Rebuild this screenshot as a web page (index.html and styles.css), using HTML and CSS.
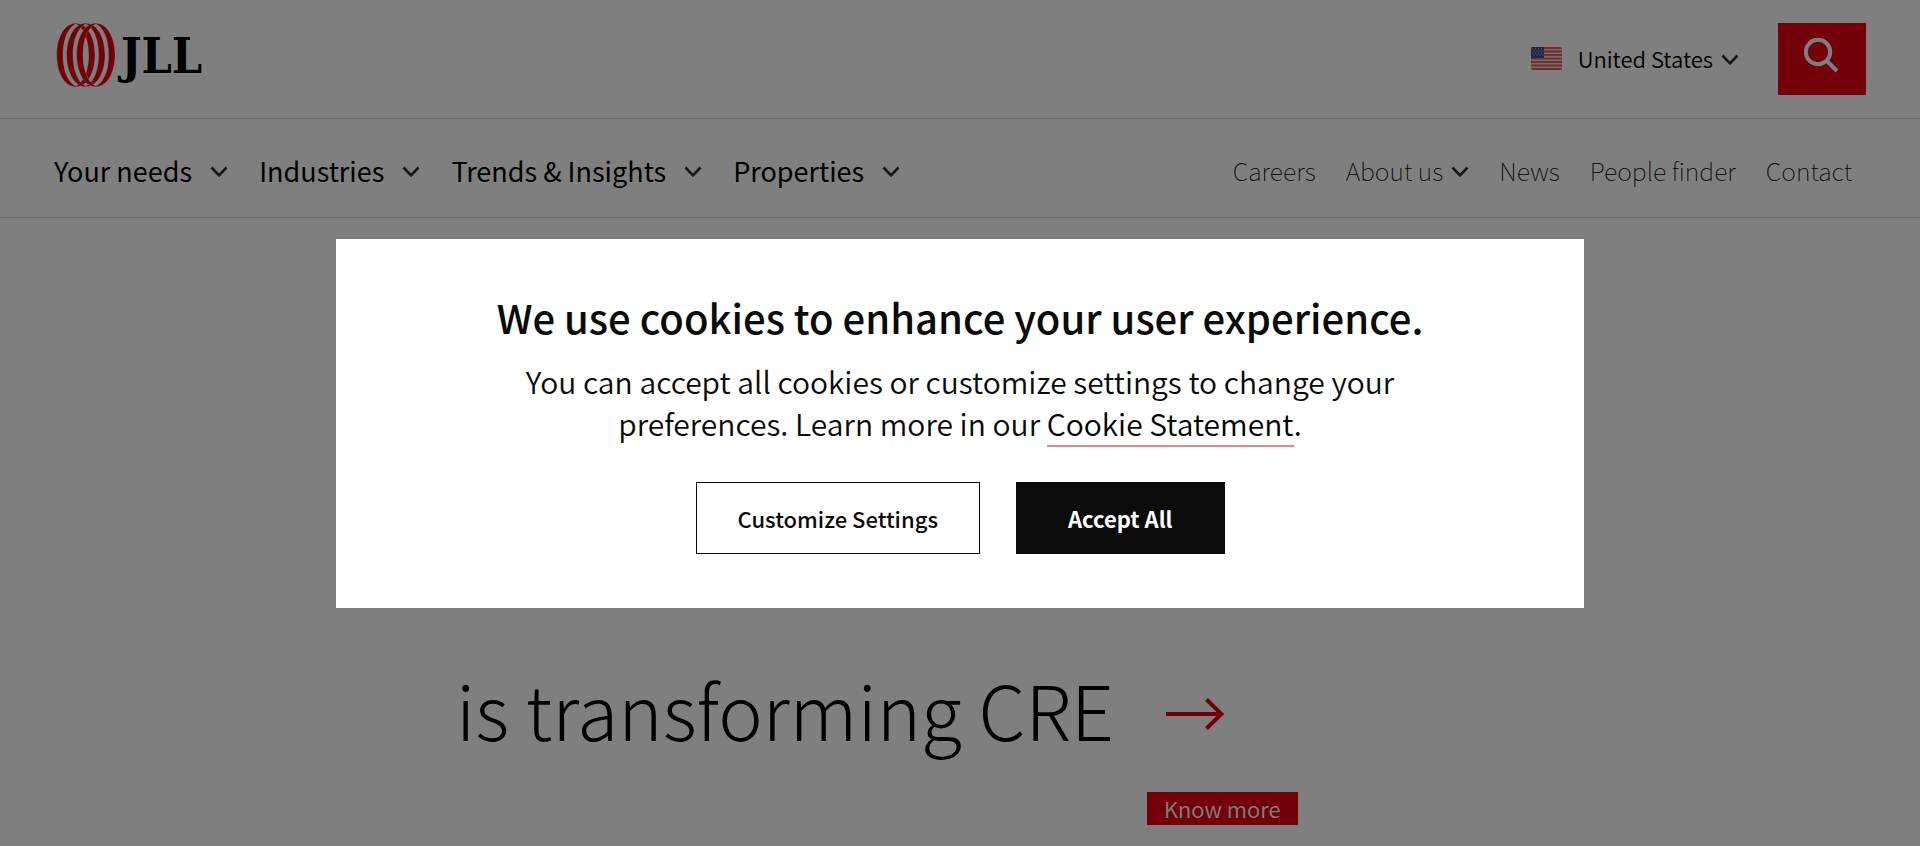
FILE: index.html
```html
<!DOCTYPE html>
<html lang="en">
<head>
<meta charset="utf-8">
<meta name="viewport" content="width=device-width, initial-scale=1">
<title>JLL</title>
<link rel="stylesheet" href="styles.css">
</head>
<body>
<svg width="0" height="0" class="sprite" aria-hidden="true">
  <symbol id="chevron" viewBox="0 0 18 12"><path d="M1.5 1.5 9 9.3l7.500-7.800" fill="none" stroke="currentColor" stroke-width="2.600"/></symbol>
</svg>
<header class="site-header">
  <div class="topbar">
    <a href="#" class="logo" aria-label="JLL home">
      <svg width="150" height="68" viewBox="0 0 150 68" aria-hidden="true">
        <g class="logo-rings" transform="translate(-16 -13) scale(.33333)">
          <path d="M160 39C205 36 225 88 225 135S205 234 160 231C190 224 206 182 206 135S190 46 160 39Z"/>
          <path d="M130 39C175 36 195 88 195 135S175 234 130 231C160 224 176 182 176 135S160 46 130 39Z"/>
          <path d="M100 39C145 36 165 88 165 135S145 234 100 231C130 224 146 182 146 135S130 46 100 39Z"/>
          <path d="M115 39C70 36 50 88 50 135S70 234 115 231C85 224 69 182 69 135S85 46 115 39Z"/>
          <path d="M145 39C100 36 80 88 80 135S100 234 145 231C115 224 99 182 99 135S115 46 145 39Z"/>
          <path d="M175 39C130 36 110 88 110 135S130 234 175 231C145 224 129 182 129 135S145 46 175 39Z"/>
        </g>
        <text class="logo-text" x="65" y="50">JLL</text>
      </svg>
    </a>
    <div class="topbar-actions">
      <button class="country" type="button">
        <svg class="flag" width="31" height="23" viewBox="0 0 31 23" aria-hidden="true">
          <clipPath id="flag-clip"><rect width="31" height="23" rx="2"/></clipPath>
          <g clip-path="url(#flag-clip)">
            <rect width="31" height="23" fill="#f0d8d8"/>
            <path d="M0 1h31M0 4.500h31M0 8h31M0 11.500h31M0 15h31M0 18.500h31M0 22h31" stroke="#d8605f" stroke-width="1.800"/>
            <rect width="13" height="11" fill="#494a85"/>
            <path d="M1 2h12M2.500 4h11M1 6h12M2.500 8h11" stroke="#c4c4dc" stroke-width="1" stroke-dasharray="1 2"/>
          </g>
        </svg>
        <span>United States</span>
        <svg class="chevron" aria-hidden="true"><use href="#chevron"/></svg>
      </button>
      <button class="search" type="button" aria-label="Search">
        <svg width="36" height="36" viewBox="0 0 36 36" aria-hidden="true"><circle cx="14" cy="15" r="12.200"/><path d="m22.500 23.500 10.500 10.500"/></svg>
      </button>
    </div>
  </div>
  <div class="navbar">
    <nav class="main-nav" aria-label="Main">
      <button type="button">Your needs<svg class="chevron" aria-hidden="true"><use href="#chevron"/></svg></button>
      <button type="button">Industries<svg class="chevron" aria-hidden="true"><use href="#chevron"/></svg></button>
      <button type="button">Trends &amp; Insights<svg class="chevron" aria-hidden="true"><use href="#chevron"/></svg></button>
      <button type="button">Properties<svg class="chevron" aria-hidden="true"><use href="#chevron"/></svg></button>
    </nav>
    <nav class="side-nav" aria-label="Secondary">
      <a href="#">Careers</a>
      <button type="button">About us<svg class="chevron" aria-hidden="true"><use href="#chevron"/></svg></button>
      <a href="#">News</a>
      <a href="#">People finder</a>
      <a href="#">Contact</a>
    </nav>
  </div>
</header>
<main class="hero">
  <div class="hero-line">
    <h1>is transforming CRE</h1>
    <a href="#" class="hero-action" aria-label="Next">
      <svg width="58" height="32" viewBox="0 0 58 32" aria-hidden="true"><path d="M0 16h55M40.500 1.500 55.500 16l-15 14.500"/></svg>
    </a>
  </div>
  <a href="#" class="know-more">Know more</a>
</main>
<div class="overlay">
  <section class="cookie-dialog" role="dialog" aria-modal="true" aria-labelledby="cookie-title">
    <h2 id="cookie-title">We use cookies to enhance your user experience.</h2>
    <p>You can accept all cookies or customize settings to change your preferences. Learn more in our <a href="#">Cookie Statement</a>.</p>
    <div class="cookie-buttons">
      <button type="button" class="customize">Customize Settings</button>
      <button type="button" class="accept">Accept All</button>
    </div>
  </section>
</div>
</body>
</html>
```
FILE: styles.css
```css
* {
  box-sizing: border-box;
}

body {
  margin: 0;
  background: #fff;
  color: #000;
  font-family: "Noto Sans CJK SC", "Noto Sans", sans-serif;
  font-size: 22px;
}

button {
  padding: 0;
  border: 0;
  background: none;
  color: inherit;
  font: inherit;
  cursor: pointer;
}

a {
  color: inherit;
  text-decoration: none;
}

.sprite {
  position: absolute;
}

.chevron {
  width: 18px;
  height: 12px;
  flex: none;
  margin-top: 4px;
  color: #2c2f36;
}

.topbar {
  display: flex;
  justify-content: space-between;
  align-items: flex-start;
  height: 119px;
  padding: 23px 54px 0 56px;
  border-bottom: 1px solid #dcdcdc;
}

.logo svg {
  display: block;
  overflow: visible;
}

.logo-rings {
  fill: #e60012;
  stroke: #fff;
  stroke-width: 1;
}

.logo-text {
  font: bold 48px "DejaVu Serif Condensed", "DejaVu Serif", serif;
}

.topbar-actions {
  display: flex;
  align-items: flex-start;
  gap: 39px;
}

.country {
  display: flex;
  align-items: center;
  height: 70px;
  font-weight: 350;
  line-height: 32px;
}

.country span {
  margin: 0 8px 0 16px;
}

.search {
  display: flex;
  justify-content: center;
  width: 88px;
  height: 72px;
  padding-top: 14px;
  background: #e60012;
}

.search svg {
  fill: none;
  stroke: #fff;
  stroke-width: 4;
}

.navbar {
  display: flex;
  justify-content: space-between;
  align-items: center;
  height: 99px;
  padding: 4px 68px 0 54px;
  border-bottom: 1px solid #dcdcdc;
}

.main-nav,
.side-nav {
  display: flex;
  align-items: center;
  gap: 31px;
}

.main-nav {
  font-size: 27px;
}

.side-nav {
  gap: 30px;
  font-size: 25px;
  font-weight: 100;
}

.main-nav button,
.side-nav button {
  display: flex;
  align-items: center;
}

.main-nav button {
  gap: 18px;
}

.side-nav button {
  gap: 8px;
}

.hero {
  width: 1008px;
  max-width: 100%;
  margin: 0 auto;
  padding: 436px 0 20px;
}

.hero-line {
  display: flex;
  align-items: center;
  gap: 52px;
}

h1 {
  margin: 0;
  font-size: 75px;
  font-weight: 200;
  line-height: 110px;
}

.hero-action {
  padding-top: 10px;
}

.hero-action svg {
  display: block;
  fill: none;
  stroke: #e60012;
  stroke-width: 4;
}

.know-more {
  display: block;
  width: fit-content;
  margin: 28px 0 0 691px;
  padding: 0 17px;
  background: #e60012;
  color: #fff;
  font-weight: 350;
  line-height: 33px;
}

.overlay {
  position: fixed;
  inset: 0;
  display: flex;
  align-items: center;
  justify-content: center;
  background: rgba(0, 0, 0, 0.5);
}

.cookie-dialog {
  width: 65%;
  padding: 48px 144px 54px;
  background: #fff;
  color: #0a0a0a;
  text-align: center;
}

.cookie-dialog h2 {
  margin: 0 0 13px;
  font-size: 40px;
  font-weight: 500;
  line-height: 60px;
}

.cookie-dialog p {
  max-width: 900px;
  margin: 0 auto 38px;
  font-size: 30px;
  font-weight: 350;
  line-height: 42px;
}

.cookie-dialog p a {
  border-bottom: 2px solid #f2828a;
  color: #000;
}

.cookie-buttons {
  display: flex;
  justify-content: center;
  gap: 36px;
}

.cookie-buttons button {
  height: 72px;
  border: 1px solid #0a0a0a;
  font-weight: 500;
}

.cookie-buttons .customize {
  padding: 0 41px;
}

.cookie-buttons .accept {
  padding: 0 51px;
  background: #0a0a0a;
  color: #fff;
  font-weight: 700;
}
```
